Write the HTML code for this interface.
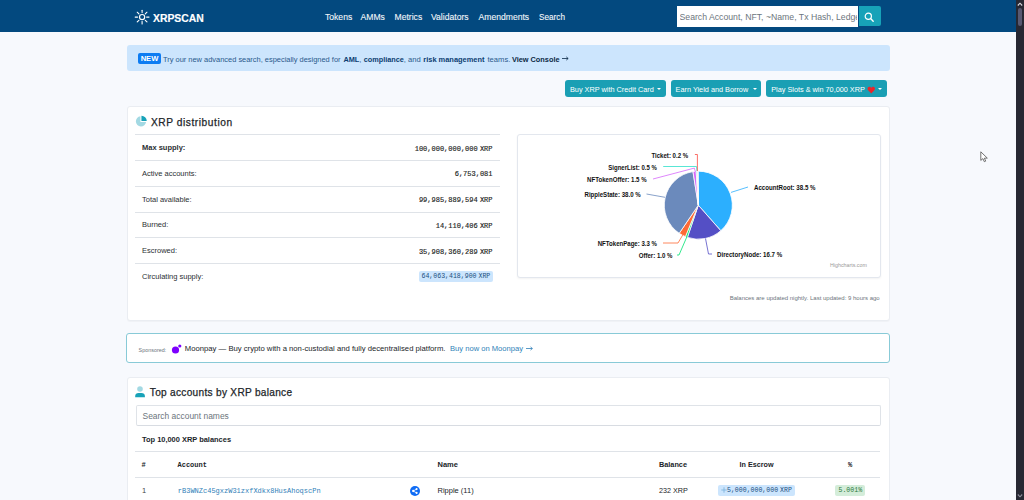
<!DOCTYPE html>
<html><head><meta charset="utf-8">
<style>
*{margin:0;padding:0;box-sizing:border-box}
html,body{width:1024px;height:500px;overflow:hidden}
body{background:#f7f9fd;font-family:"Liberation Sans",sans-serif;position:relative;color:#212529}
.a{position:absolute}
.t{position:absolute;white-space:nowrap;line-height:12px;height:12px}
.m{font-family:"Liberation Mono",monospace}
.card{position:absolute;background:#fff;border:1px solid #eaedf2;border-radius:3px;box-shadow:0 1px 1px rgba(0,0,0,.03)}
.btn{position:absolute;background:#1a9fb4;border-radius:3px;height:16.6px;top:80.3px}
.bt{position:absolute;top:83.8px;color:#fff;font-size:7.3px;line-height:12px;white-space:nowrap}
.car{position:absolute;top:88.3px;width:0;height:0;border-left:2.2px solid transparent;border-right:2.2px solid transparent;border-top:2.4px solid #fff}
.row{position:absolute;left:135px;width:365px;height:1px;background:#dfe3e8}
.lbl{font-size:7.5px;left:142px;color:#2b2f33}
.val{font-size:7px;right:531.5px;text-align:right;margin-top:0.5px;color:#1b1e22;-webkit-text-stroke:0.15px #1b1e22}
.nav{font-size:8.6px;color:#f2f6fa;top:10.5px;-webkit-text-stroke:0.1px #f2f6fa}
</style></head><body>
<div class="a" style="left:0;top:0;width:1016px;height:32.3px;background:#03497f"></div>

<!-- logo -->
<svg class="a" style="left:134px;top:9px" width="16" height="16" viewBox="0 0 16 16">
 <g stroke="#fff" stroke-width="1.1" stroke-linecap="round" fill="none">
  <circle cx="8.1" cy="8.1" r="2.6" stroke-width="1.2"/>
  <line x1="8.10" y1="3.60" x2="8.10" y2="1.20"/><line x1="11.28" y1="4.92" x2="12.98" y2="3.22"/><line x1="12.60" y1="8.10" x2="15.00" y2="8.10"/><line x1="11.28" y1="11.28" x2="12.98" y2="12.98"/><line x1="8.10" y1="12.60" x2="8.10" y2="15.00"/><line x1="4.92" y1="11.28" x2="3.22" y2="12.98"/><line x1="3.60" y1="8.10" x2="1.20" y2="8.10"/><line x1="4.92" y1="4.92" x2="3.22" y2="3.22"/>
 </g>
</svg>
<div class="t" style="left:153px;top:12.8px;font-size:10.4px;font-weight:bold;color:#fff;-webkit-text-stroke:0.15px #fff">XRPSCAN</div>

<!-- nav -->
<div class="t nav" style="left:325px">Tokens</div>
<div class="t nav" style="left:360.5px">AMMs</div>
<div class="t nav" style="left:394.5px">Metrics</div>
<div class="t nav" style="left:431px">Validators</div>
<div class="t nav" style="left:478.5px">Amendments</div>
<div class="t nav" style="left:539px;font-size:8.2px;top:11.8px">Search</div>

<!-- search -->
<div class="a" style="left:677px;top:6.2px;width:180.5px;height:20.5px;background:#fff;border-radius:0"></div>
<div class="t" style="left:679.5px;top:10.5px;font-size:8.7px;color:#6c757d;width:177px;overflow:hidden;letter-spacing:0">Search Account, NFT, ~Name, Tx Hash, Ledger</div>
<div class="a" style="left:858.5px;top:6.2px;width:22px;height:20.3px;background:#17a2b8;border-radius:0 2px 2px 0"></div>
<svg class="a" style="left:864px;top:11.5px" width="11" height="11" viewBox="0 0 11 11"><circle cx="4.3" cy="4.3" r="3.1" stroke="#fff" stroke-width="1.2" fill="none"/><line x1="6.6" y1="6.6" x2="9.2" y2="9.2" stroke="#fff" stroke-width="1.4" stroke-linecap="round"/></svg>

<!-- alert -->
<div class="a" style="left:127px;top:45.2px;width:763px;height:26px;background:#cce5fd;border-radius:3px"></div>
<div class="a" style="left:138px;top:53px;width:23px;height:10.8px;background:#0d7cf2;border-radius:2px"></div>
<div class="t" style="left:138px;top:52.8px;width:23px;text-align:center;font-size:7.6px;font-weight:bold;color:#fff">NEW</div>
<div class="t" style="left:163px;top:53.8px;font-size:7.45px;color:#2a5a8c">Try our new advanced search, especially designed for</div>
<div class="t" style="left:343.4px;top:53.8px;font-size:7.6px;color:#2a5a8c"><b style="color:#0c3e72;font-size:7.35px">AML</b>,</div>
<div class="t" style="left:363.7px;top:53.8px;font-size:7.6px;color:#2a5a8c"><b style="color:#0c3e72;font-size:7.3px">compliance</b>, and</div>
<div class="t" style="left:423.3px;top:53.8px;font-size:7.45px;color:#0c3e72;font-weight:bold">risk management</div>
<div class="t" style="left:487.5px;top:53.8px;font-size:7.6px;color:#2a5a8c">teams.</div>
<div class="t" style="left:511.9px;top:53.8px;font-size:7.35px;color:#0b2846;font-weight:bold">View Console</div>
<svg class="a" style="left:562px;top:56px" width="7" height="5" viewBox="0 0 7 5"><path d="M0 2.5 H6 M4.3 0.9 L6.2 2.5 L4.3 4.1" stroke="#0b2846" stroke-width="0.8" fill="none"/></svg>

<!-- buttons -->
<div class="btn" style="left:565.3px;width:100.6px"></div>
<div class="bt" style="left:570px">Buy XRP with Credit Card</div>
<div class="car" style="left:656.6px"></div>
<div class="btn" style="left:670.7px;width:90.7px"></div>
<div class="bt" style="left:675.6px">Earn Yield and Borrow</div>
<div class="car" style="left:752.8px"></div>
<div class="btn" style="left:766.2px;width:120.7px"></div>
<div class="bt" style="left:771.2px">Play Slots &amp; win 70,000 XRP</div>
<svg class="a" style="left:866.8px;top:85.8px" width="8.5" height="8" viewBox="0 0 8 8"><path d="M4 7.4 L0.9 4.2 C-0.3 2.9 0.4 0.7 2.1 0.7 C3 0.7 3.6 1.3 4 1.9 C4.4 1.3 5 0.7 5.9 0.7 C7.6 0.7 8.3 2.9 7.1 4.2 Z" fill="#e8262b"/></svg>
<div class="car" style="left:878px"></div>
<!-- distribution card -->
<div class="card" style="left:127px;top:106px;width:762.5px;height:214.5px"></div>
<svg class="a" style="left:135px;top:115.4px" width="12.5" height="12.5" viewBox="0 0 12 12"><path d="M5.2 1.3 A4.9 4.9 0 1 0 10.6 6.7 L5.2 6.7 Z" fill="#a3d9e3"/><path d="M6.2 0.6 A5.1 5.1 0 0 1 11.3 5.7 L6.2 5.7 Z" fill="#17a2b8"/></svg>
<div class="t" style="left:151px;top:117.4px;font-size:10.2px;letter-spacing:0.55px;color:#212529;-webkit-text-stroke:0.25px #212529">XRP distribution</div>

<div class="row" style="top:134px"></div>
<div class="row" style="top:160px"></div>
<div class="row" style="top:186px"></div>
<div class="row" style="top:212px"></div>
<div class="row" style="top:237px"></div>
<div class="row" style="top:263px"></div>

<div class="t lbl" style="top:142px;font-weight:bold">Max supply:</div>
<div class="t lbl" style="top:167.8px">Active accounts:</div>
<div class="t lbl" style="top:193.6px">Total available:</div>
<div class="t lbl" style="top:219.4px">Burned:</div>
<div class="t lbl" style="top:245.2px">Escrowed:</div>
<div class="t lbl" style="top:271px">Circulating supply:</div>

<div class="t val m" style="top:142px">100,000,000,000<span style="margin-left:2.2px">XRP</span></div>
<div class="t val m" style="top:167.8px">6,753,081</div>
<div class="t val m" style="top:193.6px">99,985,889,594<span style="margin-left:2.2px">XRP</span></div>
<div class="t val m" style="top:219.4px">14,110,406<span style="margin-left:2.2px">XRP</span></div>
<div class="t val m" style="top:245.2px">35,908,360,289<span style="margin-left:2.2px">XRP</span></div>
<div class="a" style="left:418.8px;top:271px;width:74.2px;height:10.8px;background:#cce5fd;border-radius:2px"></div>
<div class="t m" style="left:421.5px;top:270.5px;font-size:6.55px;color:#21507f">64,063,418,900<span style="margin-left:2px">XRP</span></div>

<!-- pie box -->
<div class="a" style="left:517px;top:134.4px;width:363.5px;height:143.6px;background:#fff;border:1px solid #e3e7ee;border-radius:3px;box-shadow:0 1px 2px rgba(0,0,0,.05)"></div>
<div class="t" style="left:830px;top:259px;font-size:5.3px;color:#999">Highcharts.com</div>
<div class="t" style="left:729.7px;top:292px;font-size:6px;color:#6c757d">Balances are updated nightly. Last updated: 9 hours ago</div>

<!-- sponsored -->
<div class="a" style="left:126.3px;top:333.3px;width:763.4px;height:30.2px;background:#fff;border:1.5px solid #88cad7;border-radius:3px"></div>
<div class="t" style="left:138.6px;top:343.6px;font-size:5.4px;color:#6c757d">Sponsored:</div>
<svg class="a" style="left:170px;top:343px" width="14" height="12" viewBox="0 0 14 12"><circle cx="5.5" cy="7" r="3.6" fill="#7d00fe"/><circle cx="9.8" cy="3" r="1.6" fill="#7d00fe"/></svg>
<div class="t" style="left:184.8px;top:342.8px;font-size:7.7px;color:#212529">Moonpay — Buy crypto with a non-custodial and fully decentralised platform.</div>
<div class="t" style="left:450px;top:342.8px;font-size:7.6px;color:#2f7fb8">Buy now on Moonpay</div><svg class="a" style="left:525.5px;top:346px" width="7" height="5" viewBox="0 0 7 5"><path d="M0 2.5 H6.2 M4.5 0.9 L6.4 2.5 L4.5 4.1" stroke="#2f7fb8" stroke-width="0.8" fill="none"/></svg>

<!-- top accounts card -->
<div class="card" style="left:127px;top:376.6px;width:762.5px;height:140px"></div>
<svg class="a" style="left:135.2px;top:385.8px" width="10.4" height="12" viewBox="0 0 10.4 12"><circle cx="5" cy="3" r="2.8" fill="#a3d9e3"/><path d="M0.2 11.2 L0.2 10 C0.2 8 1.5 7 3.6 7 L6.4 7 C8.5 7 9.9 8 9.9 10 L9.9 11.2 Z" fill="#17a2b8"/></svg>
<div class="t" style="left:149.8px;top:387.3px;font-size:10.1px;letter-spacing:0.3px;color:#212529;-webkit-text-stroke:0.25px #212529">Top accounts by XRP balance</div>
<div class="a" style="left:135.5px;top:405.3px;width:745px;height:20.5px;background:#fff;border:1px solid #dfe3e8;border-bottom-color:#d8dce2;border-radius:2px"></div>
<div class="t" style="left:142.5px;top:409.9px;font-size:8.45px;color:#6c757d">Search account names</div>
<div class="t" style="left:142px;top:433.6px;font-size:7.45px;font-weight:bold">Top 10,000 XRP balances</div>

<div class="row" style="top:451px;width:745px"></div>
<div class="row" style="top:477px;width:745px"></div>
<div class="t m" style="left:141.5px;top:458.5px;font-size:7px;font-weight:bold">#</div>
<div class="t m" style="left:177.5px;top:458.5px;font-size:7px;font-weight:bold">Account</div>
<div class="t" style="left:437.5px;top:459px;font-size:7.5px;font-weight:bold">Name</div>
<div class="t" style="left:659px;top:459px;font-size:7.3px;font-weight:bold">Balance</div>
<div class="t" style="left:739.6px;top:459px;font-size:7.2px;font-weight:bold">In Escrow</div>
<div class="t m" style="left:848px;top:458.5px;font-size:7px;font-weight:bold">%</div>

<div class="t" style="left:142px;top:485px;font-size:7.5px;color:#444">1</div>
<div class="t m" style="left:177.8px;top:485px;font-size:7px;color:#3080b8">rB3WNZc45gxzW31zxfXdkx8HusAhoqscPn</div>
<svg class="a" style="left:409.8px;top:486.3px" width="10" height="10" viewBox="0 0 10 10"><circle cx="5" cy="5" r="5" fill="#0f6cf5"/><g fill="#fff"><circle cx="3.2" cy="5" r="1.15"/><circle cx="6.6" cy="3.1" r="1.05"/><circle cx="6.6" cy="6.9" r="1.05"/></g><path d="M3.2 5 L6.6 3.1 M3.2 5 L6.6 6.9" stroke="#fff" stroke-width="0.8"/></svg>
<div class="t" style="left:437.5px;top:485px;font-size:7.5px">Ripple (11)</div>
<div class="t" style="left:659px;top:485px;font-size:7.2px">232 XRP</div>
<div class="a" style="left:717.8px;top:484.7px;width:76.9px;height:10.9px;background:#cce5fd;border-radius:2px"></div>
<svg class="a" style="left:721px;top:487px" width="6" height="6" viewBox="0 0 6 6"><path d="M3 0.3 V5.7 M0.3 3 H5.7" stroke="#7fb4de" stroke-width="0.9"/></svg><div class="t m" style="left:727px;top:485.2px;font-size:6.55px;color:#21507f">5,000,000,000<span style="margin-left:2px">XRP</span></div>
<div class="a" style="left:835px;top:485px;width:29.7px;height:10.9px;background:#d4edda;border-radius:2px"></div>
<div class="t m" style="left:838.5px;top:485.2px;font-size:6.55px;color:#2a7a3a">5.001%</div>

<!-- pie -->
<svg class="a" style="left:0;top:0" width="1024" height="500" viewBox="0 0 1024 500">
<g>
<path d="M698.30 205.20 L698.30 171.20 A34 34 0 0 1 720.78 230.70 Z" fill="#2caffe" stroke="#fff" stroke-width="0.8" stroke-linejoin="round"/>
<path d="M698.30 205.20 L720.78 230.70 A34 34 0 0 1 687.39 237.40 Z" fill="#544fc5" stroke="#fff" stroke-width="0.8" stroke-linejoin="round"/>
<path d="M698.30 205.20 L687.39 237.40 A34 34 0 0 1 685.39 236.65 Z" fill="#00e272" stroke="#fff" stroke-width="0.8" stroke-linejoin="round"/>
<path d="M698.30 205.20 L685.39 236.65 A34 34 0 0 1 679.19 233.32 Z" fill="#fe6a35" stroke="#fff" stroke-width="0.8" stroke-linejoin="round"/>
<path d="M698.30 205.20 L679.19 233.32 A34 34 0 0 1 692.98 171.62 Z" fill="#6b8abc" stroke="#fff" stroke-width="0.8" stroke-linejoin="round"/>
<path d="M698.30 205.20 L692.98 171.62 A34 34 0 0 1 696.17 171.27 Z" fill="#d568fb" stroke="#fff" stroke-width="0.8" stroke-linejoin="round"/>
<path d="M698.30 205.20 L696.17 171.27 A34 34 0 0 1 697.23 171.22 Z" fill="#2ee0ca" stroke="#fff" stroke-width="0.8" stroke-linejoin="round"/>
<path d="M698.30 205.20 L697.23 171.22 A34 34 0 0 1 697.66 171.21 Z" fill="#fa4b42" stroke="#fff" stroke-width="0.8" stroke-linejoin="round"/>
</g>
<g fill="none" stroke-width="0.8">
<path d="M731 192.4 L748 187" stroke="#2caffe"/>
<path d="M705.5 238.5 L708.5 254 L712 254" stroke="#544fc5"/>
<path d="M687 236.5 L679 255 L677 255" stroke="#00e272"/>
<path d="M683 234.5 L678 243 L663 243" stroke="#fe6a35"/>
<path d="M665 197.3 L646.5 194" stroke="#6b8abc"/>
<path d="M695.5 172 L694.3 168.1 L653 179" stroke="#d568fb"/>
<path d="M697 171 L696.5 166.5 L663.2 166.5" stroke="#2ee0ca"/>
<path d="M697.4 171 L697.4 154.5 L694.9 154.5" stroke="#fa4b42"/>
</g>
<g font-family="Liberation Sans" font-weight="bold" font-size="6.6" fill="#111">
<text textLength="61.5" lengthAdjust="spacingAndGlyphs" x="754" y="189.8">AccountRoot: 38.5 %</text>
<text textLength="65.2" lengthAdjust="spacingAndGlyphs" x="717" y="256.8">DirectoryNode: 16.7 %</text>
<text textLength="33.8" lengthAdjust="spacingAndGlyphs" x="672.5" y="257.7" text-anchor="end">Offer: 1.0 %</text>
<text textLength="59.3" lengthAdjust="spacingAndGlyphs" x="657" y="246.2" text-anchor="end">NFTokenPage: 3.3 %</text>
<text textLength="56.2" lengthAdjust="spacingAndGlyphs" x="640.7" y="197.1" text-anchor="end">RippleState: 38.0 %</text>
<text textLength="59.5" lengthAdjust="spacingAndGlyphs" x="646.6" y="181.5" text-anchor="end">NFTokenOffer: 1.5 %</text>
<text textLength="48.5" lengthAdjust="spacingAndGlyphs" x="656.8" y="169.8" text-anchor="end">SignerList: 0.5 %</text>
<text textLength="36.8" lengthAdjust="spacingAndGlyphs" x="688.2" y="157.6" text-anchor="end">Ticket: 0.2 %</text>
</g>
</svg>

<!-- scrollbar -->
<div class="a" style="left:1016px;top:0;width:8px;height:500px;background:#272833"></div>
<div class="a" style="left:1018px;top:8px;width:4px;height:18px;background:#585972;border-radius:2px"></div>
<svg class="a" style="left:1016px;top:1px" width="8" height="6" viewBox="0 0 8 6"><path d="M1.8 4.5 L4 2.2 L6.2 4.5" stroke="#d8d8e0" stroke-width="1.1" fill="none"/></svg>
<svg class="a" style="left:1016px;top:493px" width="8" height="6" viewBox="0 0 8 6"><path d="M1.8 1.5 L4 3.8 L6.2 1.5" stroke="#8a8a98" stroke-width="1.1" fill="none"/></svg>

<!-- cursor -->
<svg class="a" style="left:979px;top:150px" width="11" height="14" viewBox="0 0 11 14"><path d="M1.8 1.8 L1.8 10.4 L3.9 8.6 L5.3 11.7 L6.7 11.1 L5.4 8.2 L8.3 8.1 Z" fill="#fff" stroke="#5a5a5a" stroke-width="0.85" stroke-linejoin="round"/></svg>
</body></html>
